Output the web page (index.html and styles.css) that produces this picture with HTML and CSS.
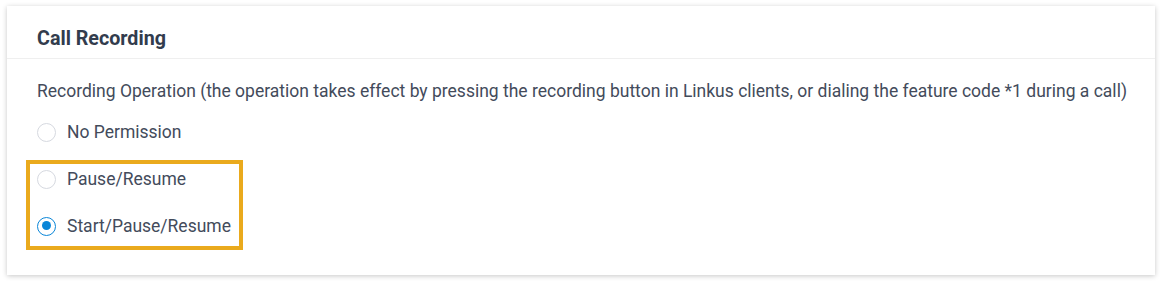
FILE: index.html
```html
<!DOCTYPE html>
<html>
<head>
<meta charset="utf-8">
<link rel="stylesheet" href="styles.css">
</head>
<body>
<div class="card">
  <div class="card-header">Call Recording</div>
  <div class="card-body">
    <div class="desc">Recording Operation (the operation takes effect by pressing the recording button in Linkus clients, or dialing the feature code *1 during a call)</div>
    <div class="options">
      <label class="radio"><span class="dot"></span><span class="label">No Permission</span></label>
      <div class="highlight">
        <label class="radio"><span class="dot"></span><span class="label">Pause/Resume</span></label>
        <label class="radio last"><span class="dot checked"></span><span class="label">Start/Pause/Resume</span></label>
      </div>
    </div>
  </div>
</div>
</body>
</html>
```
FILE: styles.css
```css
html, body {
  margin: 0;
  padding: 0;
  background: #ffffff;
}
body {
  padding: 6px 6px 6px 7px;
  font-family: Roboto, "Liberation Sans", sans-serif;
  color: #434b5b;
}
.card {
  width: 1148px;
  height: 269px;
  background: #ffffff;
  box-shadow: 0 1px 5px rgba(0,0,0,0.22);
  box-sizing: border-box;
}
.card-header {
  height: 53px;
  box-sizing: border-box;
  border-bottom: 1px solid #efefef;
  padding: 22px 0 0 30px;
  font-size: 19.7px;
  font-weight: 700;
  color: #323c4d;
  line-height: 22px;
}
.card-body {
  padding: 21px 0 0 30px;
}
.desc {
  font-size: 17.5px;
  line-height: 22px;
  color: #434b5b;
  white-space: nowrap;
}
.options {
  margin-top: 19px;
}
.radio {
  display: flex;
  align-items: center;
  height: 22px;
  margin-bottom: 17px;
}
.dot {
  width: 19px;
  height: 19px;
  border: 1px solid #d6d9e0;
  border-radius: 50%;
  box-sizing: border-box;
  flex: none;
  margin-right: 11px;
  position: relative;
}
.dot.checked {
  border: 1.5px solid #0a86d8;
}
.dot.checked::after {
  content: "";
  position: absolute;
  left: 3.5px;
  top: 3.5px;
  width: 9px;
  height: 9px;
  border-radius: 50%;
  background: #0a86d8;
}
.label {
  font-size: 17.5px;
  line-height: 22px;
  color: #434b5b;
}
.highlight {
  margin-left: -11px;
  width: 217px;
  height: 90px;
  box-sizing: border-box;
  border: 4px solid #eaaa1d;
  padding: 4px 0 0 7px;
}
.highlight .radio {
  margin-bottom: 25px;
}
.highlight .radio.last {
  margin-bottom: 0;
}
```
